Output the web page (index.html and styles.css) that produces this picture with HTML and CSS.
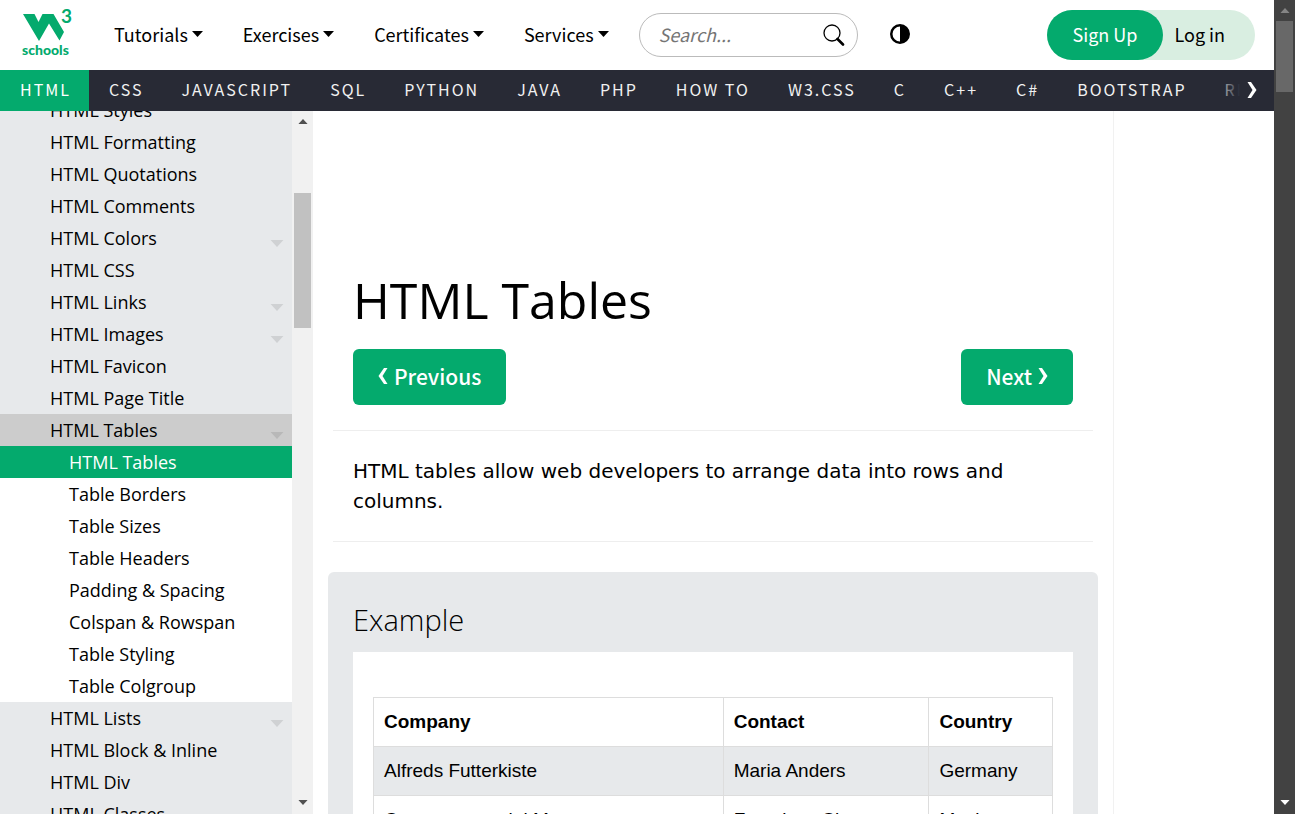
FILE: index.html
```html
<!DOCTYPE html>
<html lang="en">
<head>
<meta charset="utf-8">
<title>HTML Tables</title>
<link rel="stylesheet" href="styles.css">
</head>
<body>
<svg class="defs" aria-hidden="true">
  <symbol id="caret" viewBox="0 0 11 6"><path d="M0 0h11L5.500 6z"/></symbol>
  <symbol id="chev" viewBox="0 0 10 16"><path d="M.5 0h3.500l5.500 8-5.500 8H.5l5-8z"/></symbol>
</svg>
<div class="window">
  <div class="page">
    <header class="top">
      <a class="logo" href="#" aria-label="W3Schools home">
        <svg width="52" height="50" viewBox="0 0 52 50">
          <path d="M1 4H12.500L16.500 12 20.500 4H31.500L42 22 37.500 30.500 27 13.500 17 31z"/>
          <text class="logo-three" x="39" y="13">3</text>
          <text class="logo-word" x="0" y="45">schools</text>
        </svg>
      </a>
      <nav class="menu">
        <a href="#">Tutorials<svg class="caret"><use href="#caret"/></svg></a>
        <a href="#">Exercises<svg class="caret"><use href="#caret"/></svg></a>
        <a href="#">Certificates<svg class="caret"><use href="#caret"/></svg></a>
        <a href="#">Services<svg class="caret"><use href="#caret"/></svg></a>
      </nav>
      <form class="search">
        <input type="text" placeholder="Search..." aria-label="Search">
        <button type="button" aria-label="Run search">
          <svg width="22" height="22" viewBox="0 0 22 22"><circle cx="9" cy="9" r="8" fill="none" stroke="#000" stroke-width="1.300"/><path d="M14.500 15l5.500 5.500" stroke="#000" stroke-width="2.600" stroke-linecap="round"/></svg>
        </button>
      </form>
      <button class="contrast" type="button" aria-label="Toggle dark mode">
        <svg width="20" height="20" viewBox="0 0 20 20"><circle cx="10" cy="10" r="8.750" fill="none" stroke="#000" stroke-width="2.500"/><path d="M10 1a9 9 0 010 18z"/></svg>
      </button>
      <div class="account">
        <a class="signup" href="#">Sign Up</a>
        <a class="login" href="#">Log in</a>
      </div>
    </header>
    <nav class="strip">
      <a class="on" href="#">HTML</a><a href="#">CSS</a><a href="#">JAVASCRIPT</a><a href="#">SQL</a><a href="#">PYTHON</a><a href="#">JAVA</a><a href="#">PHP</a><a href="#">HOW TO</a><a href="#">W3.CSS</a><a href="#">C</a><a href="#">C++</a><a href="#">C#</a><a href="#">BOOTSTRAP</a><a href="#">REACT</a>
      <button class="more" type="button" aria-label="Scroll right"><svg width="10" height="16"><use href="#chev"/></svg></button>
    </nav>
    <div class="body">
      <aside class="side">
        <nav class="list">
          <a href="#">HTML Styles</a>
          <a href="#">HTML Formatting</a>
          <a href="#">HTML Quotations</a>
          <a href="#">HTML Comments</a>
          <a href="#">HTML Colors<svg class="fold"><use href="#caret"/></svg></a>
          <a href="#">HTML CSS</a>
          <a href="#">HTML Links<svg class="fold"><use href="#caret"/></svg></a>
          <a href="#">HTML Images<svg class="fold"><use href="#caret"/></svg></a>
          <a href="#">HTML Favicon</a>
          <a href="#">HTML Page Title</a>
          <a class="open" href="#">HTML Tables<svg class="fold"><use href="#caret"/></svg></a>
          <div class="sub">
            <a class="on" href="#">HTML Tables</a>
            <a href="#">Table Borders</a>
            <a href="#">Table Sizes</a>
            <a href="#">Table Headers</a>
            <a href="#">Padding &amp; Spacing</a>
            <a href="#">Colspan &amp; Rowspan</a>
            <a href="#">Table Styling</a>
            <a href="#">Table Colgroup</a>
          </div>
          <a href="#">HTML Lists<svg class="fold"><use href="#caret"/></svg></a>
          <a href="#">HTML Block &amp; Inline</a>
          <a href="#">HTML Div</a>
          <a href="#">HTML Classes</a>
        </nav>
      </aside>
      <div class="bar bar-light">
        <svg class="arrow up"><use href="#caret"/></svg>
        <div class="track"><div class="thumb"></div></div>
        <svg class="arrow"><use href="#caret"/></svg>
      </div>
      <main class="main">
        <div class="banner"></div>
        <h1>HTML Tables</h1>
        <div class="pager">
          <a href="#"><svg class="back" width="10" height="16"><use href="#chev"/></svg>Previous</a>
          <a href="#">Next<svg width="10" height="16"><use href="#chev"/></svg></a>
        </div>
        <hr>
        <p>HTML tables allow web developers to arrange data into rows and columns.</p>
        <hr>
        <section class="example">
          <h2>Example</h2>
          <div class="sheet">
            <table>
              <thead><tr><th class="c1">Company</th><th class="c2">Contact</th><th>Country</th></tr></thead>
              <tbody>
                <tr class="even"><td>Alfreds Futterkiste</td><td>Maria Anders</td><td>Germany</td></tr>
                <tr><td>Centro comercial Moctezuma</td><td>Francisco Chang</td><td>Mexico</td></tr>
              </tbody>
            </table>
          </div>
        </section>
      </main>
      <div class="rail"></div>
    </div>
  </div>
  <div class="bar bar-dark">
    <svg class="arrow up"><use href="#caret"/></svg>
    <div class="track"><div class="thumb"></div></div>
    <svg class="arrow down"><use href="#caret"/></svg>
  </div>
</div>
</body>
</html>
```
FILE: styles.css
```css
* { box-sizing: border-box; }
body { margin: 0; color: #000; background: #fff; font-family: "Noto Sans CJK SC", "Noto Sans", sans-serif; }
a { color: inherit; text-decoration: none; }
button { border: 0; padding: 0; background: none; font: inherit; }
svg { display: block; flex: none; }
use { fill: currentColor; }
.defs { position: absolute; width: 0; height: 0; }

.window { display: flex; height: 100vh; overflow: hidden; }
.page { flex: 1; min-width: 0; display: flex; flex-direction: column; }

.top { flex: none; height: 70px; display: flex; align-items: center; }
.logo { margin-left: 22px; margin-right: 20px; }
.logo svg { fill: #04aa6d; overflow: visible; }
.logo-three { font: 700 19px Lato, sans-serif; }
.logo-word { font: 900 14px Lato, sans-serif; }
.menu { display: flex; font-size: 18px; line-height: 30px; }
.menu a { display: flex; align-items: center; gap: 4px; padding: 0 20px 2px; }
.caret { width: 11px; height: 6px; }
.search { display: flex; align-items: center; width: 219px; height: 44px; margin-left: 10px; padding: 0 12px 0 19px; border: 1px solid #bbb; border-radius: 22px; }
.search input { flex: 1; min-width: 0; border: 0; outline: 0; padding: 0 0 2px; background: none; font: italic 18px "Noto Sans CJK SC", sans-serif; }
.search input::placeholder { color: #757575; }
.contrast { margin-left: 32px; padding-bottom: 2px; }
.account { display: flex; margin-left: auto; margin-right: 19px; height: 50px; line-height: 49px; font-size: 18px; border-radius: 25px; background: #d9eee1; }
.signup { padding: 0 26px 0 25px; border-radius: 25px; background: #04aa6d; color: #fff; }
.login { padding: 0 30px 0 11px; }

.strip { flex: none; position: relative; display: flex; height: 41px; overflow: hidden; background: #282a35; color: #f1f1f1; font-size: 16px; line-height: 38px; letter-spacing: 2px; white-space: nowrap; }
.strip a { padding: 0 18px 0 20px; }
.strip .on { background: #04aa6d; color: #fff; }
.more { position: absolute; top: 0; right: 0; height: 100%; padding: 0 17px 2px 33px; color: #fff; background: linear-gradient(to right, rgba(40, 42, 53, 0), #282a35 26px); display: flex; align-items: center; }

.body { flex: 1; min-height: 0; display: flex; overflow: hidden; }
.side { flex: none; width: 292px; overflow: hidden; background: #e7e9eb; font: 18px/32px "Open Sans", sans-serif; }
.list { margin-top: -17px; }
.list a { display: flex; justify-content: space-between; padding: 0 8px 0 50px; height: 32px; }
.list .fold { width: 14px; height: 7px; margin-top: 18px; color: #cfd1d3; }
.list .open { background: #ccc; }
.list .open .fold { color: #b8b8b8; }
.sub { background: #fff; }
.sub a { padding-left: 69px; }
.sub .on { background: #04aa6d; color: #fff; }

.bar { flex: none; width: 21px; display: flex; flex-direction: column; align-items: center; padding: 8px 0 9px; }
.track { flex: 1; width: 17px; }
.arrow { width: 10px; height: 5px; }
.up { transform: rotate(180deg); }
.bar-light { background: #f1f1f1; color: #505050; }
.bar-light .track { padding-top: 69px; }
.bar-light .thumb { height: 135px; background: #c1c1c1; }
.bar-dark { background: #424242; color: #858585; }
.bar-dark .track { padding-top: 8px; }
.bar-dark .thumb { height: 71px; background: #686868; }
.bar-dark .down { color: #fff; }

.main { flex: 1; min-width: 0; padding: 0 20px; border-right: 1px solid #f1f1f1; overflow: hidden; }
.banner { height: 154px; }
h1 { margin: 0 20px; font: 400 50px/70px "Open Sans", sans-serif; }
.pager { display: flex; justify-content: space-between; margin: 14px 20px 25px; }
.pager a { display: flex; align-items: center; gap: 6px; height: 56px; padding: 0 25px 2px; border-radius: 6px; background: #04aa6d; color: #fff; font-size: 21px; font-weight: 500; }
.back { transform: rotate(180deg); }
hr { margin: 0; border: 0; border-top: 1px solid #eee; }
p { margin: 25px 20px; font: 20px/30px "DejaVu Sans", sans-serif; }
.example { margin: 30px -5px 0; padding: 25px; border-radius: 6px; background: #e7e9eb; }
h2 { margin: 0 0 10px; font: 300 29px/45px "Open Sans", sans-serif; }
.sheet { padding: 45px 20px; background: #fff; }
table { width: 100%; border-collapse: collapse; table-layout: fixed; font: 19px/28px "Liberation Sans", sans-serif; }
th, td { padding: 10px; border: 1px solid #ddd; text-align: left; }
.c1 { width: 51.5%; }
.c2 { width: 30.3%; }
.even { background: #e7e9eb; }
.rail { flex: none; width: 160px; }
```
